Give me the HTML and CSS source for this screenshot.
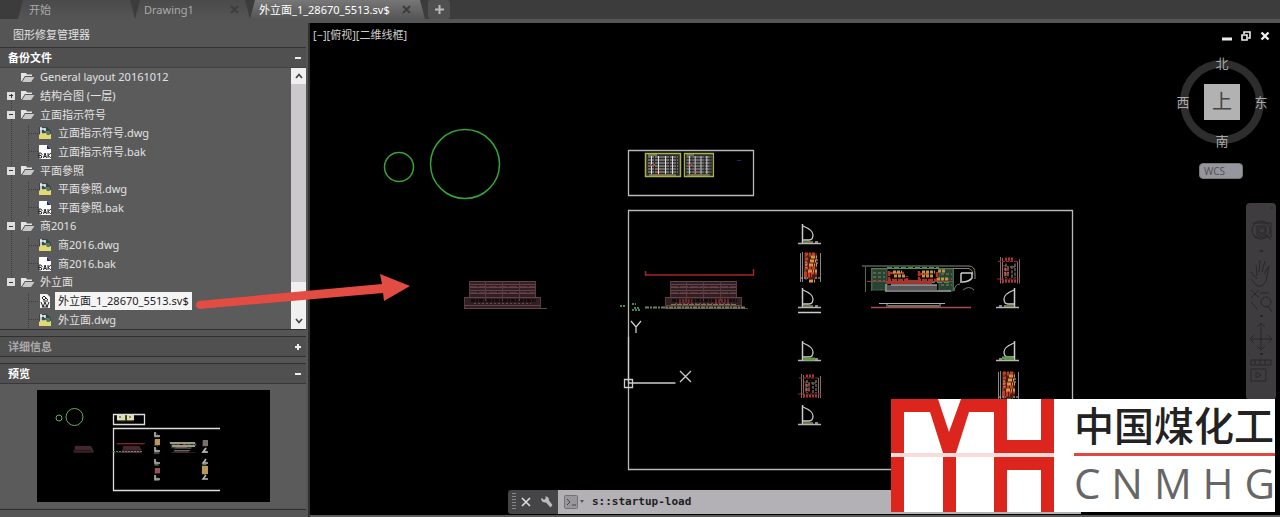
FILE: index.html
```html
<!DOCTYPE html>
<html lang="zh-CN">
<head>
<meta charset="utf-8">
<meta name="viewport" content="width=device-width, initial-scale=1">
<title>图形修复管理器</title>
<link rel="stylesheet" href="styles.css">
</head>
<body>
<svg class="defs" aria-hidden="true">
  <defs>
    <symbol id="folder" viewBox="0 0 14 11"><path d="M0 1h5l1 1.500h5V4H4L1 9H0z" fill="#e4e4e4"/><path d="M1 10 4 5h9.500L10 10z" fill="#c9c9c9"/><path d="M1 9.500 4 4.500h9" fill="none" stroke="#555" stroke-width=".8"/></symbol>
    <symbol id="dwg" viewBox="0 0 14 14"><path d="M1 1h8l4 4v8H1z" fill="#3b454e"/><path d="M1 9c3-3 4-1 6-2s3 1 6 1v5H1z" fill="#e2d970"/><path d="M3 1v7M7 2v3M2 3h5" stroke="#e9f3f6" stroke-width="1.500"/><path d="M7 5h5v4H9z" fill="#527d69"/></symbol>
    <symbol id="bak" viewBox="0 0 14 14"><path d="M1 0h8l4 4v10H1z" fill="#fff"/><path d="M9 0v4h4z" fill="#252578"/><path d="M1 8v5h2l1-1-1-1.500 1-1L3 8zM1 10.500h2M5.500 13l1.500-5 1.500 5M6 11.500h2M10 8v5M13 8l-3 2.500 3 2.500" fill="none" stroke="#111" stroke-width=".9"/></symbol>
    <symbol id="sv" viewBox="0 0 14 14"><path d="M2 0h7l3 3v11H2z" fill="#f5f5f5"/><path d="M4 4l2-2 2 2-2 2zM7 3l3 3M3 8l2 5 2-5 2 5 2-5M4 13h6M5 7h5" fill="none" stroke="#222"/></symbol>
    <symbol id="close" viewBox="0 0 9 9"><path d="M1 1l7 7M8 1 1 8" stroke="currentColor" stroke-width="2"/></symbol>

    <g id="door"><path d="M4.500 0v19" stroke="#ccc" stroke-width="1.500"/><path d="M5 2C10 4 15 7 15 11q0 5-4 5H5" fill="none" stroke="#ccc" stroke-width="1.300"/><path d="M5 18h10" stroke="#66733f" stroke-width="2"/><path d="M17 18h3" stroke="#888" stroke-width="2"/><path d="M0 19.500h23" stroke="#b5b5b5" stroke-width="1.500"/></g>
    <g id="room" fill="none"><path d="M5 1h13v26H5z" fill="#4a1d14"/><path d="M1.500 1v29M21.500 1v29M3.500 0v30" stroke="#888"/><path d="M6 2h11M6 7h4M6 12h4M6 16h10M5 21h14M5 24h8" stroke="#c73c22" stroke-width="3" stroke-dasharray="3 1 2 1"/><path d="M12 5h6M11 9h7M10 13h8M9 19h9M10 29h7" stroke="#d99542" stroke-width="3" stroke-dasharray="4 1 1 1"/><path d="M6 4h9M5 18h5M6 27h4" stroke="#6b7444" stroke-dasharray="2 2"/><path d="M2 26h7M16 26h5M18 7v6M7 9v7" stroke="#bbb" stroke-dasharray="2 1"/></g>
    <g id="redroom" fill="none"><path d="M3.500 0v24M5.500 1v23M20.500 4v20M22.500 2v22" stroke="#8c686b"/><path d="M1 4h20M6 8h4M0 20h23" stroke="#922c2d" stroke-dasharray="3 1"/><path d="M8 2h9M7 11h5M7 16h6M5 22h14" stroke="#aa3430" stroke-width="3" stroke-dasharray="2 1"/><path d="M15 8v11M18 6v13M9 6v13" stroke="#999" stroke-dasharray="3 1"/><path d="M10 9h8M7 14h6" stroke="#8b704b" stroke-dasharray="2 1"/></g>
    <g id="house" fill="none"><path d="M5 0h67v16h5v11H0V16h5z" fill="#302023"/><path d="M5 .500h67M5 3.500h67M5 6.500h67M5 9.500h67M5 12.500h67M0 16.500h77M0 24.500h77M0 27.500h83" stroke="#664148"/><path d="M5 5.500h67M5 11.500h67" stroke="#57373e" stroke-dasharray="8 2"/><path d="M7 19.500h65" stroke="#130b0c" stroke-width="3" stroke-dasharray="4 1 2 1"/><path d="M10 22.500h57" stroke="#6b454a" stroke-dasharray="2 2"/><path d="M5.500 0v16M71.500 0v16M.500 16v11M76.500 16v11M21.500 0v20M38.500 0v20M55.500 0v20" stroke="#5a393f"/></g>
    <g id="sheet" fill="none"><path d="M.500.500h35v23H.500z" fill="#2c2c2c" stroke="#a9b248" stroke-width="1.500"/><path d="M3 4h30M3 7h30M3 10h30M3 13h30M3 16h30M3 19h30" stroke="#aaa" stroke-dasharray="6 1 3 1"/><path d="M6.500 3v18M13.500 3v18M20.500 3v18M27.500 3v18" stroke="#ddd"/><path d="M3 2h9M4 22h27" stroke="#b8b664"/><path d="M5 12h5M11 19h6" stroke="#b14d47" stroke-width="2" stroke-dasharray="2 1"/></g>

    <g id="parts">
      <use href="#house" x="464" y="281"/>
      <g fill="none">
        <path d="M645.500 271v4h108v-6" stroke="#a8242b" stroke-width="1.500"/>
        <use href="#house" x="665" y="281"/>
        <path d="M645 307.500h101" stroke="#688658" stroke-width="2" stroke-dasharray="4 1 2 1"/><path d="M671 304.500h65" stroke="#7d7952" stroke-dasharray="5 1"/><path d="M679 301h13M715 301h14" stroke="#6d2528" stroke-width="4" stroke-dasharray="2 1"/>
        <path d="M620 306h5M632 304h4M634 308h6M632 310h8" stroke="#4e8458" stroke-width="2" stroke-dasharray="2 1"/>
      </g>
      <use href="#sheet" x="645" y="153"/>
      <g transform="translate(684 153) scale(.83 1)"><use href="#sheet"/></g>
      <use href="#door" x="798" y="224"/><use href="#room" x="799" y="252"/>
      <use href="#door" x="798" y="288"/><path d="M798 312.500h23" stroke="#ccc" stroke-width="1.500"/>
      <use href="#door" x="798" y="341"/><path d="M804 359h11" stroke="#5c9b42" stroke-width="3"/>
      <use href="#redroom" x="798" y="374"/><use href="#door" x="798" y="405"/>
      <g fill="none">
        <path d="M862 266h107q6 0 6 8v5" stroke="#8a8a83"/><path d="M871 268.500h98q4 1 4 6" stroke="#927a55"/>
        <path d="M865.500 267v25M871.500 268v23M953.500 269v22" stroke="#467451"/>
        <path d="M872 269h15v21h-15zM939 269h14v22h-14z" fill="#28432f" stroke="#3e6548"/>
        <path d="M873 273h12M873 277h12M873 281h12M941 274h11M941 279h11M941 285h11" stroke="#858578" stroke-dasharray="3 2"/>
        <path d="M887 268h52M888 282h62" stroke="#3f9554" stroke-width="2" stroke-dasharray="5 2"/>
        <path d="M889 271v9h18v-4M919 271v9h18v-8M890 273h14M918 274h11" stroke="#b52f29" stroke-width="2.500" stroke-dasharray="5 1"/>
        <path d="M894 276h12M893 272h9M922 272h13M922 276h11M938 271h8M937 279h11" stroke="#b99745" stroke-width="3" stroke-dasharray="3 1"/>
        <path d="M906 281h12M886 283h46" stroke="#a3342c" stroke-width="2"/><path d="M867 281.500h86" stroke="#993b3b"/>
        <path d="M887 285h50v5h-50z" fill="#555"/><path d="M885 291h66M886 284v7M891 285h46" stroke="#9c9c9c" stroke-width="1.500"/>
        <path d="M961 273v10M961 273h11v5q-3 4-10 4" stroke="#ccc" stroke-width="1.500"/><path d="M954 291q1-7 6-7M963 290q6-5 11 0" stroke="#777"/>
        <path d="M879 303.500h66M887 303v4M940 303v4" stroke="#aaa"/><path d="M888 306h51" stroke="#697650" stroke-width="2"/><path d="M871 307.500h100" stroke="#a94b4b" stroke-width="1.500"/>
      </g>
      <g transform="translate(997 257) scale(1 1.100)"><use href="#redroom"/></g>
      <g transform="translate(1019 288) scale(-1 1)"><use href="#door"/></g>
      <g transform="translate(1019 341) scale(-1 1)"><use href="#door"/><path d="M6 17h11" stroke="#5c9b42" stroke-width="3"/></g>
      <use href="#room" x="997" y="371"/>
    </g>
  </defs>
</svg>

<div class="app">
  <nav class="tabs" aria-label="图形选项卡">
    <div class="tab tab-first"><button class="tab-label" type="button">开始</button></div>
    <div class="tab tab-drawing"><button class="tab-label" type="button">Drawing1</button><button class="tab-close" type="button" aria-label="关闭"><svg><use href="#close"/></svg></button></div>
    <div class="tab tab-active"><button class="tab-label" type="button">外立面_1_28670_5513.sv$</button><button class="tab-close" type="button" aria-label="关闭"><svg><use href="#close"/></svg></button></div>
    <button class="tab-add" type="button" aria-label="新建"><svg viewBox="0 0 9 9"><path d="M4.500 0v9M0 4.500h9" stroke="#bbb" stroke-width="2"/></svg></button>
  </nav>

  <div class="main">
    <aside class="sidebar">
      <h1 class="title">图形修复管理器</h1>
      <section class="section">
        <h2 class="head">备份文件<button class="toggle" type="button" aria-label="折叠"></button></h2>
        <div class="files">
          <ul class="tree">
            <li class="row"><svg class="icon folder"><use href="#folder"/></svg><span class="name">General layout 20161012</span></li>
            <li class="row"><button class="box box-plus" type="button" aria-label="展开"></button><svg class="icon folder"><use href="#folder"/></svg><span class="name">结构合图 (一层)</span></li>
            <li class="row"><button class="box" type="button" aria-label="折叠"></button><svg class="icon folder"><use href="#folder"/></svg><span class="name">立面指示符号</span></li>
            <li class="row child"><svg class="icon"><use href="#dwg"/></svg><span class="name">立面指示符号.dwg</span></li>
            <li class="row child"><svg class="icon"><use href="#bak"/></svg><span class="name">立面指示符号.bak</span></li>
            <li class="row"><button class="box" type="button" aria-label="折叠"></button><svg class="icon folder"><use href="#folder"/></svg><span class="name">平面參照</span></li>
            <li class="row child"><svg class="icon"><use href="#dwg"/></svg><span class="name">平面參照.dwg</span></li>
            <li class="row child"><svg class="icon"><use href="#bak"/></svg><span class="name">平面參照.bak</span></li>
            <li class="row"><button class="box" type="button" aria-label="折叠"></button><svg class="icon folder"><use href="#folder"/></svg><span class="name">商2016</span></li>
            <li class="row child"><svg class="icon"><use href="#dwg"/></svg><span class="name">商2016.dwg</span></li>
            <li class="row child"><svg class="icon"><use href="#bak"/></svg><span class="name">商2016.bak</span></li>
            <li class="row"><button class="box" type="button" aria-label="折叠"></button><svg class="icon folder"><use href="#folder"/></svg><span class="name">外立面</span></li>
            <li class="row child"><svg class="icon"><use href="#sv"/></svg><span class="name selected">外立面_1_28670_5513.sv$</span></li>
            <li class="row child"><svg class="icon"><use href="#dwg"/></svg><span class="name">外立面.dwg</span></li>
          </ul>
          <div class="scroll">
            <button class="scroll-btn" type="button" aria-label="向上"><svg viewBox="0 0 8 6"><path d="M1 5l3-3.500L7 5" fill="none" stroke="#444" stroke-width="1.700"/></svg></button>
            <div class="thumb"></div>
            <button class="scroll-btn" type="button" aria-label="向下"><svg viewBox="0 0 8 6"><path d="M1 1l3 3.500L7 1" fill="none" stroke="#444" stroke-width="1.700"/></svg></button>
          </div>
        </div>
      </section>
      <section class="section"><h2 class="head muted">详细信息<button class="toggle toggle-plus" type="button" aria-label="展开"></button></h2></section>
      <section class="section section-preview">
        <h2 class="head">预览<button class="toggle" type="button" aria-label="折叠"></button></h2>
        <div class="preview">
          <svg class="preview-img" viewBox="37 391 233 112" role="img" aria-label="预览">
            <g fill="none" stroke="#68a868"><circle cx="59" cy="419" r="3"/><circle cx="74.500" cy="418" r="8.500"/></g>
            <path d="M113.500 415.500h31v10h-31zM220 429.500H113.500v62H220" fill="none" stroke="#ddd" stroke-width="1.300"/>
            <path d="M74 453l3-6h14l3 6z" fill="#38353a"/><path d="M122 451l3-4h14l3 4z" fill="#452a2f"/>
            <g transform="translate(-37.600 379.600) scale(.24)"><use href="#parts"/></g>
            <path d="M117 416h8v5h-8zM127 416h7v5h-7z" fill="#e2dfb5"/><path d="M119 418h2M129 418h2" stroke="#333"/>
            <path d="M117 444.500h28" stroke="#73282b"/><path d="M113 452.500h29" stroke="#777c70" stroke-dasharray="2 1"/><path d="M170 444h25M172 447h23" stroke="#9c9986" stroke-width="2"/><path d="M174 451.500h16" stroke="#7a5757"/>
            <path d="M155 433v4h5M155 448v4h5M155 460v4h5M155 476v4h5M206 449l-3 4h5M206 460l-3 4h5M206 476l-3 4h5" fill="none" stroke="#bbb" stroke-width="1.500"/>
            <path d="M155 440h5v6h-5zM202 467h6v8h-6z" fill="#ba975e"/><path d="M155 469h5v5h-5z" fill="#92525c"/><path d="M203 441h5v6h-5z" fill="#77706f"/>
          </svg>
        </div>
      </section>
    </aside>

    <main class="canvas">
      <svg class="drawing" viewBox="309 23 971 494" preserveAspectRatio="xMinYMin meet" role="img" aria-label="外立面">
        <g fill="none" stroke="#36a436" stroke-width="1.500"><circle cx="399" cy="167" r="14.500"/><circle cx="465" cy="164" r="34.500"/></g>
        <path d="M628.500 150.500h125v45h-125zM628.500 210.500h444v259h-444z" fill="none" stroke="#b9b9b9" stroke-width="1.300"/>
        <path d="M737 160.500h4" stroke="#24247d"/>
        <use href="#parts"/>
        <path d="M628.500 337v46h47M624.500 379.500h8v8h-8zM680 371l11 11M691 371l-11 11M631 321l5 6 5-6M636 327v6" fill="none" stroke="#ccc" stroke-width="1.300"/>
      </svg>
      <div class="viewlabel">[−][俯视][二维线框]</div>
      <div class="winctl">
        <button type="button" aria-label="最小化"><svg viewBox="0 0 10 10"><path d="M0 8h10" stroke="#eee" stroke-width="3"/></svg></button>
        <button type="button" aria-label="还原"><svg viewBox="0 0 10 10"><path d="M1 4h5v5H1zM3 3V1h6v6H7" fill="none" stroke="#eee" stroke-width="1.600"/></svg></button>
        <button type="button" aria-label="关闭"><svg viewBox="0 0 10 10"><path d="M1.500 1.500l7 7M8.500 1.500l-7 7" stroke="#eee" stroke-width="2.400"/></svg></button>
      </div>
      <div class="cube">
        <span class="north">北</span><span class="west">西</span><button class="top" type="button">上</button><span class="east">东</span><span class="south">南</span>
      </div>
      <button class="wcs" type="button">WCS</button>
      <div class="navbar">
        <svg viewBox="0 0 29 197" fill="none" stroke="#272728" aria-hidden="true"><circle cx="15" cy="27" r="9"/><path d="M6 20h19v14H8M11 23h9v9h-9zM20 32l5 5M13 25h6v5h-6z"/><path d="M11 76 5 69M11 73l-1-11M13 69l1-12M16 69l3-11M18 71l5-8-3 15-4 5h-5l-6-7"/><path d="M5 87l8 8M13 87l-8 8M5 99l7 8M14 90h9"/><circle cx="20" cy="99" r="5"/><path d="M22 103l4 6M15 120v27M11 124l4-4 4 4M11 143l4 4 4-4M5 136h20M8 132l-4 4 4 4M22 132l4 4-4 4M5 157h20v5H5zM9 157v5M14 157v5M19 157v5M5 166h15v12H5zM10 169l5 3-5 3z"/><path d="M14 48h3M14 113h3M14 151h3" stroke-width="2"/><path d="M24 5h3"/></svg>
      </div>
      <form class="command">
        <span class="grip"></span>
        <button class="cmd-btn" type="button" aria-label="关闭"><svg viewBox="0 0 12 12"><path d="M2 2l8 8M10 2l-8 8" stroke="#ddd" stroke-width="1.600"/></svg></button>
        <button class="cmd-btn" type="button" aria-label="自定义"><svg viewBox="0 0 12 12"><path d="M1 2l2 2 2-2L4 .500q4-.500 4 4L11.500 9 9.500 11.500 5 6.500Q1 7 0 3z" fill="#bbb"/></svg></button>
        <label class="cmd-field"><svg class="prompt" viewBox="0 0 20 14"><rect x=".500" y=".500" width="13" height="13" rx="1" fill="#99979c" stroke="#747278"/><path d="M3 4l3 3-3 3M8 10h4" fill="none" stroke="#444"/><path d="M16 5h4l-2 3z" fill="#555"/></svg><input class="cmd-input" type="text" value="s::startup-load" aria-label="命令"></label>
      </form>
      <div class="brand">
        <svg class="mark" viewBox="0 0 163 113" aria-hidden="true"><path d="M0 54h163v4H0z" fill="#fadbd8"/><path fill="#dc251c" d="M0 0h47l11 33L70 0h46v41h34V0h13v54h-60V13H78L65 54H52L39 13H13v41H0zM0 58h13v55H0zM52 58h13v55H52zM103 58h60v55h-13V71h-34v42h-13z"/></svg>
        <div class="brand-text"><div class="brand-cn">中国煤化工</div><div class="brand-en"><span>C</span><span>N</span><span>M</span><span>H</span><span>G</span></div></div>
      </div>
    </main>
  </div>
  <svg class="arrow" viewBox="0 0 216 42" aria-hidden="true"><path d="M4 30 188 13 186 3l30 12-26 15-1-8L5 38q-6-3-1-8z" fill="#e24c42"/></svg>
</div>
</body>
</html>
```
FILE: styles.css
```css
* { box-sizing: border-box; }
body { margin: 0; background: #000; font-family: "Noto Sans", "Noto Sans CJK SC", sans-serif; font-size: 11px; color: #e2e2e2; }
button { margin: 0; padding: 0; border: 0; background: none; color: inherit; font: inherit; }
h1, h2, ul { margin: 0; padding: 0; font-size: 11px; }
.defs { position: absolute; width: 0; height: 0; }
.app { position: relative; display: flex; flex-direction: column; height: 100vh; overflow: hidden; }

.tabs { display: flex; height: 23px; padding-left: 18px; background: #3c3c3c; border-bottom: 4px solid #555; }
.tab { display: flex; align-items: center; justify-content: space-between; padding: 0 11px; background: linear-gradient(#4a4a4a, #555); color: #aaa; clip-path: polygon(0 100%, 5px 0, calc(100% - 5px) 0, 100% 100%); }
.tab-label { line-height: 18px; white-space: nowrap; }
.tab-first { width: 117px; }
.tab-drawing { width: 115px; padding-left: 9px; }
.tab-active { width: 175px; padding: 0 14px 0 9px; background: linear-gradient(#777, #555); color: #fff; }
.tab-close { width: 9px; height: 9px; color: #3d3d3d; }
.tab-close svg, .tab-add svg { display: block; width: 9px; height: 9px; }
.tab-add { display: flex; align-items: center; justify-content: center; width: 22px; margin-left: 3px; border-radius: 3px; background: #505050; }

.main { display: flex; flex: 1; min-height: 0; }
.sidebar { display: flex; flex-direction: column; width: 310px; flex: none; padding-right: 2px; background: #555; border-right: 2px solid #303030; }
.title { height: 25px; padding-left: 13px; font-weight: 400; line-height: 24px; border-bottom: 1px solid #333; }
.section { border-bottom: 1px solid #303030; }
.section + .section { margin-top: 6px; border-top: 1px solid #303030; }
.head { display: flex; align-items: center; justify-content: space-between; height: 19px; padding: 0 5px 0 8px; font-weight: 700; line-height: 18px; color: #fff; background: #505050; }
.muted { color: #aaa; }
.toggle { width: 6px; height: 6px; background: linear-gradient(#eee, #eee) center / 6px 2px no-repeat; }
.toggle-plus { background: linear-gradient(#eee, #eee) center / 6px 2px no-repeat, linear-gradient(#eee, #eee) center / 2px 6px no-repeat; }

.files { display: flex; height: 262px; background: #5b5b5b; border-top: 1px solid #444; }
.tree { display: grid; flex: 1; grid-template-rows: repeat(14, 1fr); list-style: none; background: repeating-linear-gradient(transparent 0 1px, #3d3d3d 1px 2px) 11px 28px / 1px 188px no-repeat; }
.row { display: flex; align-items: center; min-height: 0; padding-left: 20px; line-height: 18px; }
.child { padding-left: 38px; background: repeating-linear-gradient(transparent 0 1px, #3d3d3d 1px 2px) 28px 0 / 1px 100% no-repeat, repeating-linear-gradient(90deg, transparent 0 1px, #3d3d3d 1px 2px) 28px 50% / 10px 1px no-repeat; }
.icon { width: 14px; height: 14px; flex: none; }
.folder { height: 11px; margin-left: 1px; margin-right: 3px; }
.name { padding: 0 2px; white-space: nowrap; }
.child .name { padding: 0 3px; margin-left: 3px; }
.selected { background: #f4f4f4; color: #222; }
.box { width: 8px; height: 8px; margin-left: -13px; margin-right: 5px; border: 1px solid #ddd; background: linear-gradient(#333, #333) center / 4px 1px no-repeat, #ddd; }
.box-plus { background: linear-gradient(#333, #333) center / 4px 1px no-repeat, linear-gradient(#333, #333) center / 1px 4px no-repeat, #ddd; }
.scroll { display: flex; flex-direction: column; width: 15px; background: #f0f0f0; }
.scroll-btn { display: flex; align-items: center; justify-content: center; height: 16px; background: #f0f0f0; }
.scroll-btn svg { width: 8px; height: 6px; }
.thumb { height: 198px; margin-bottom: auto; background: #cbc9cb; }
.section-preview { margin-bottom: 7px; flex: 1; }
.preview { display: flex; justify-content: center; padding: 6px 0; border-top: 1px solid #383838; background: #5b5b5b; }
.preview-img { display: block; width: 233px; height: 112px; background: #000; }

.canvas { position: relative; flex: 1; min-width: 0; overflow: hidden; background: #000; border-bottom: 2px solid #5b5b5b; }
.drawing { position: absolute; top: 0; left: -1px; width: calc(100% + 1px); }
.viewlabel { position: absolute; top: 4px; left: 3px; line-height: 16px; color: #ccc; }
.winctl { position: absolute; top: 8px; right: 10px; display: flex; gap: 9px; }
.winctl button, .winctl svg { display: block; width: 10px; height: 10px; }
.cube { position: absolute; top: 31px; right: 10px; display: grid; grid-template: 18px 60px 18px / 18px 60px 18px; place-items: center; font-size: 13px; line-height: 18px; color: #aaa; }
.cube::before { content: ""; position: absolute; inset: 6px; border: 8px solid #2d2d2d; border-radius: 50%; }
.cube > * { position: relative; }
.north { grid-area: 1 / 2; }
.west { grid-area: 2 / 1; }
.top { grid-area: 2 / 2; width: 36px; height: 36px; background: #b2b2b2; color: #444; font-size: 20px; line-height: 32px; }
.east { grid-area: 2 / 3; }
.south { grid-area: 3 / 2; }
.wcs { position: absolute; top: 140px; right: 37px; width: 44px; height: 16px; padding-left: 4px; border: 1px solid #777; border-radius: 4px; background: #96969e; color: #555; font-size: 10px; line-height: 12px; text-align: left; }
.navbar { position: absolute; top: 180px; right: 4px; width: 30px; border-radius: 4px; background: #3e3c3f; }
.navbar svg { display: block; width: 29px; height: 197px; }
.command { position: absolute; left: 198px; right: 199px; bottom: 1px; display: flex; align-items: center; height: 24px; background: #454447; border-radius: 3px 0 0 3px; }
.grip { width: 4px; height: 18px; margin: 0 4px; background: repeating-linear-gradient(#888 0 1px, transparent 1px 3px); }
.cmd-btn { width: 12px; height: 12px; margin-right: 9px; }
.cmd-btn svg { display: block; width: 12px; height: 12px; }
.cmd-field { display: flex; align-items: center; flex: 1; height: 24px; padding-left: 5px; margin-left: -4px; background: #b3b1b5; }
.prompt { width: 22px; height: 14px; }
.cmd-input { flex: 1; min-width: 0; margin-left: 7px; padding: 0; border: 0; outline: 0; background: none; color: #222; font: 700 11px/20px "DejaVu Sans Mono", monospace; }
.brand { position: absolute; right: 5px; bottom: 3px; display: flex; height: 113px; background: #fff; }
.mark { width: 163px; height: 113px; }
.brand-text { width: 201px; margin-left: 20px; color: #222; }
.brand-cn { height: 57px; border-bottom: 3px solid #e0483f; font: 500 40px/50px "Noto Sans CJK SC", sans-serif; white-space: nowrap; }
.brand-en { display: flex; justify-content: space-between; color: #666; font: 42px/54px "Open Sans", sans-serif; }
.arrow { position: absolute; top: 271px; left: 194px; width: 216px; height: 42px; }
```
